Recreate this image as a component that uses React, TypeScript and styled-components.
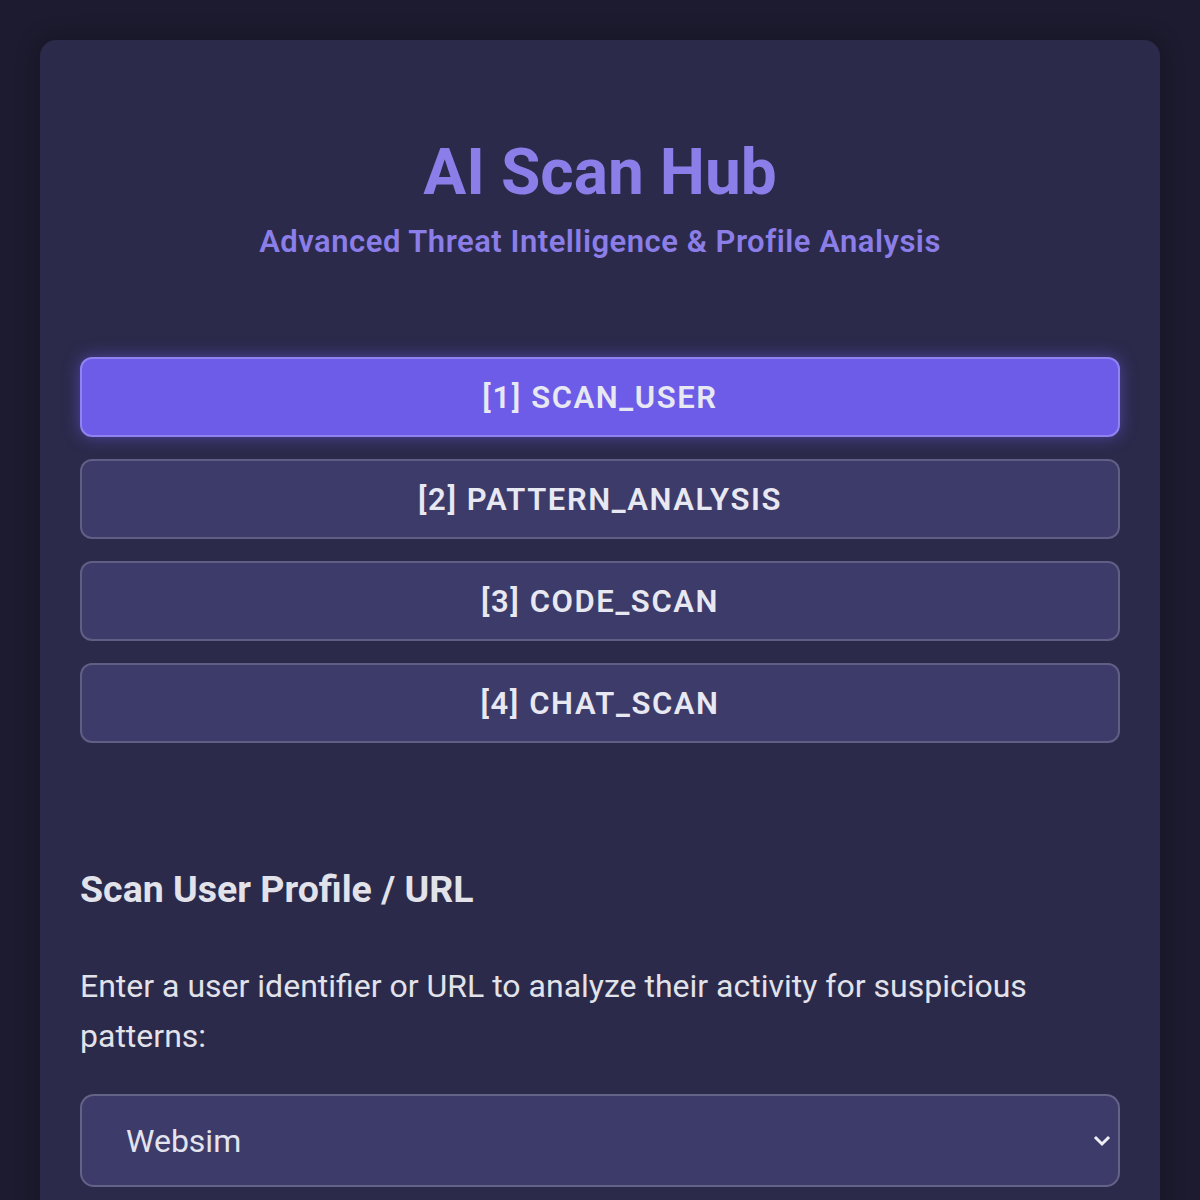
import React, { useState } from 'react';
import styled, { createGlobalStyle } from 'styled-components';

const GlobalStyle = createGlobalStyle`
  * {
    box-sizing: border-box;
  }
  body {
    margin: 0;
    background: #1c1b2f;
    font-family: Roboto, 'Liberation Sans', sans-serif;
    color: #e4e4ee;
  }
`;

const Page = styled.div`
  padding: 40px 40px 0;
  min-height: 1200px;
`;

const Card = styled.div`
  background: #2b2a4b;
  border-radius: 16px;
  padding: 95px 40px 60px;
  box-shadow: 0 0 24px rgba(0, 0, 0, 0.25);
`;

const Header = styled.header`
  text-align: center;
  margin-bottom: 97px;
`;

const Title = styled.h1`
  margin: 0 0 13px;
  font-size: 64px;
  font-weight: 700;
  color: #8b7ee8;
  line-height: normal;
`;

const Subtitle = styled.p`
  margin: 0;
  font-size: 31px;
  font-weight: 600;
  letter-spacing: 0.5px;
  color: #8b7ee8;
  line-height: normal;
`;

const Tabs = styled.nav`
  display: flex;
  flex-direction: column;
  gap: 22px;
`;

const Tab = styled.button<{ $active?: boolean }>`
  height: 80px;
  border-radius: 12px;
  border: 2px solid ${({ $active }) => ($active ? '#8e83f0' : 'rgba(255, 255, 255, 0.18)')};
  background: ${({ $active }) => ($active ? '#6c5ce7' : '#3d3b6a')};
  box-shadow: ${({ $active }) => ($active ? '0 0 16px rgba(108, 92, 231, 0.55)' : 'none')};
  color: #e8e8f2;
  font-family: Roboto, 'Liberation Sans', sans-serif;
  font-size: 31px;
  font-weight: 600;
  letter-spacing: 1.6px;
  cursor: pointer;
`;

const Section = styled.section`
  margin-top: 124px;
`;

const SectionTitle = styled.h2`
  margin: 0 0 50px;
  font-size: 37.5px;
  font-weight: 700;
  color: #e2e2ea;
  line-height: normal;
`;

const Description = styled.p`
  margin: 0 0 33px;
  font-size: 32px;
  line-height: 50px;
  color: #e2e2ea;
`;

const SelectWrap = styled.div`
  position: relative;
`;

const Select = styled.select`
  width: 100%;
  height: 93px;
  appearance: none;
  border-radius: 14px;
  border: 2px solid rgba(255, 255, 255, 0.2);
  background: #3d3b6a;
  color: #e4e4ee;
  font-family: Roboto, 'Liberation Sans', sans-serif;
  font-size: 32px;
  padding: 0 44px;
  outline: none;
`;

const Chevron = styled.svg`
  position: absolute;
  right: 8px;
  top: 50%;
  width: 20px;
  height: 20px;
  transform: translateY(-50%);
  pointer-events: none;
`;

const tabs = ['[1] SCAN_USER', '[2] PATTERN_ANALYSIS', '[3] CODE_SCAN', '[4] CHAT_SCAN'];

export default function App() {
  const [active, setActive] = useState(0);

  return (
    <Page>
      <GlobalStyle />
      <Card>
        <Header>
          <Title>AI Scan Hub</Title>
          <Subtitle>Advanced Threat Intelligence &amp; Profile Analysis</Subtitle>
        </Header>
        <Tabs>
          {tabs.map((t, i) => (
            <Tab key={t} $active={i === active} onClick={() => setActive(i)}>
              {t}
            </Tab>
          ))}
        </Tabs>
        <Section>
          <SectionTitle>Scan User Profile / URL</SectionTitle>
          <Description>
            Enter a user identifier or URL to analyze their activity for suspicious patterns:
          </Description>
          <SelectWrap>
            <Select defaultValue="websim">
              <option value="websim">Websim</option>
              <option value="url">Custom URL</option>
            </Select>
            <Chevron viewBox="0 0 20 20">
              <path d="M4 7 L10 13 L16 7" fill="none" stroke="#eeeef4" strokeWidth="3" strokeLinecap="square" />
            </Chevron>
          </SelectWrap>
        </Section>
      </Card>
    </Page>
  );
}
